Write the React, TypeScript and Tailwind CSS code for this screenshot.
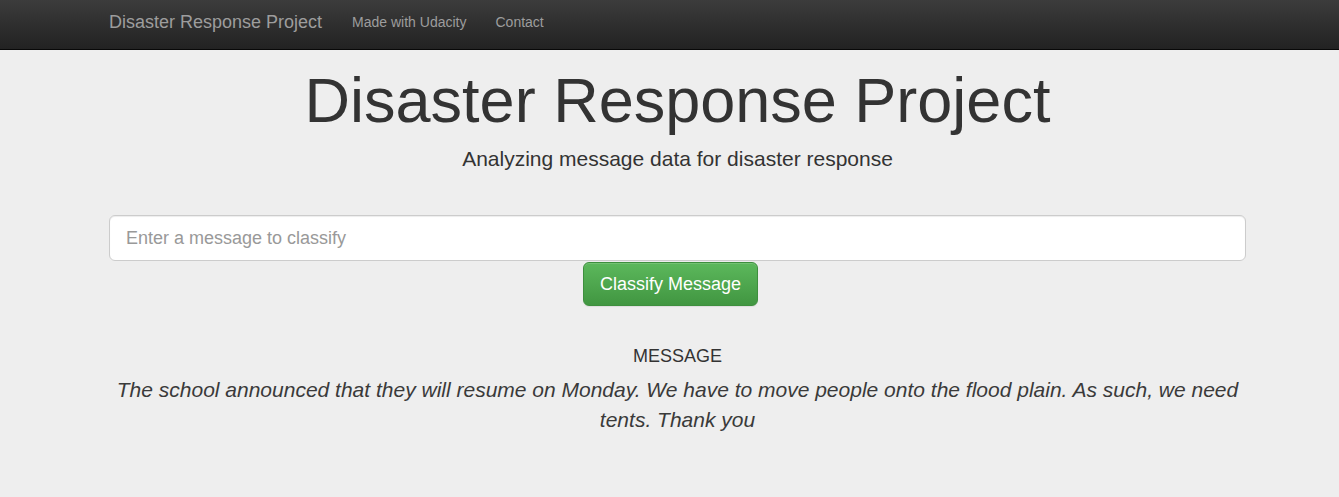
import React from "react";

export default function App() {
  return (
    <div className="min-h-[497px] bg-[#eeeeee] text-[#333333]" style={{ fontFamily: '"Liberation Sans", Arial, sans-serif' }}>
      <nav className="h-[50px] border-b border-[#080808] bg-gradient-to-b from-[#3c3c3c] to-[#222222]">
        <div className="ml-[109px] flex h-full items-center pb-[5px]">
          <span className="text-[18px] leading-[20px] text-[#9d9d9d]">Disaster Response Project</span>
          <span className="ml-[30px] text-[14px] leading-[20px] text-[#9d9d9d]">Made with Udacity</span>
          <span className="ml-[29px] text-[14px] leading-[20px] text-[#9d9d9d]">Contact</span>
        </div>
      </nav>
      <div className="ml-[109px] w-[1137px]">
        <h1 className="mt-[16px] text-center text-[63px] leading-[69px] font-normal text-[#333333]">Disaster Response Project</h1>
        <p className="mt-[9px] text-center text-[21px] leading-[30px] font-light text-[#333333]">Analyzing message data for disaster response</p>
        <div className="mt-[41px] flex h-[46px] items-center rounded-[6px] border border-[#cccccc] bg-white px-[16px] shadow-[inset_0_1px_1px_rgba(0,0,0,0.075)]">
          <span className="text-[18px] leading-[24px] text-[#999999]">Enter a message to classify</span>
        </div>
        <div className="mt-[1px] ml-[474px] flex h-[44px] w-[175px] items-center justify-center rounded-[6px] border border-[#3e8f3e] bg-gradient-to-b from-[#5cb85c] to-[#419641] text-[18px] leading-[24px] text-white shadow-[inset_0_1px_0_rgba(255,255,255,0.15),0_1px_1px_rgba(0,0,0,0.075)]">
          Classify Message
        </div>
        <div className="mt-[40px] text-center text-[18px] leading-[20px] text-[#333333] uppercase">Message</div>
        <p className="mt-[9px] text-center text-[21px] leading-[30px] italic text-[#3a3a3a]">
          The school announced that they will resume on Monday. We have to move people onto the flood plain. As such, we need tents. Thank you
        </p>
      </div>
    </div>
  );
}
